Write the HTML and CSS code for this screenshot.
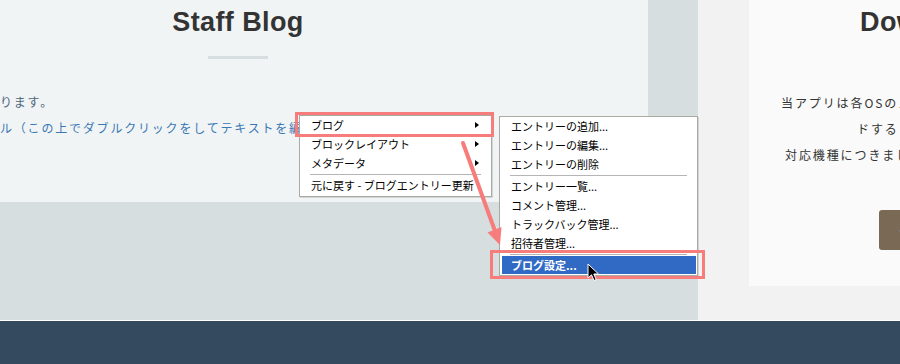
FILE: index.html
```html
<!DOCTYPE html>
<html lang="ja">
<head>
    <meta charset="UTF-8">
    <meta name="viewport" content="width=device-width, initial-scale=1.0">
    <title>Staff Blog</title>
    <link rel="stylesheet" href="styles.css">
</head>
<body>
<div class="page">

    <!-- Main content area -->
    <div class="main">
        <!-- Blog column -->
        <section class="blog-col">
            <div class="blog-card">
                <h2>Staff Blog</h2>
                <div class="rule"></div>
                <p class="note">ります。</p>
                <p class="edit-link">ル（この上でダブルクリックをしてテキストを編集します）</p>
            </div>
        </section>

        <!-- Download column -->
        <aside class="dl-col">
            <div class="dl-card">
                <h2>Download</h2>
                <p class="line-1">当アプリは各OSのストアからダウンロー</p>
                <p class="line-2">ドすることができます。</p>
                <p class="line-3">対応機種につきましては各ストアをご確認ください。</p>
                <a class="dl-button" href="#">ダウンロード</a>
            </div>
        </aside>
    </div>

    <!-- Footer section -->
    <footer></footer>

    <!-- Context menu -->
    <ul class="menu main-menu">
        <li class="has-sub">ブログ</li>
        <li class="has-sub">ブロックレイアウト</li>
        <li class="has-sub">メタデータ</li>
        <li class="sep"></li>
        <li>元に戻す - ブログエントリー更新</li>
    </ul>

    <!-- Sub menu -->
    <ul class="menu sub-menu">
        <li>エントリーの追加...</li>
        <li>エントリーの編集...</li>
        <li>エントリーの削除</li>
        <li class="sep"></li>
        <li>エントリー一覧...</li>
        <li>コメント管理...</li>
        <li>トラックバック管理...</li>
        <li>招待者管理...</li>
        <li class="sep"></li>
        <li class="active">ブログ設定...</li>
    </ul>

    <!-- Annotation boxes -->
    <div class="mark mark-blog"></div>
    <div class="mark mark-settings"></div>

    <!-- Annotation arrow -->
    <svg class="arrow" width="900" height="364" viewBox="0 0 900 364">
        <line x1="463" y1="143" x2="495" y2="231" stroke="#f77c7c" stroke-width="4" stroke-linecap="round"/>
        <polygon points="500,245 501.5,227 487.5,232.5" fill="#f77c7c"/>
    </svg>

    <!-- Mouse pointer -->
    <svg class="pointer" width="14" height="20" viewBox="0 0 14 20">
        <path d="M1 1 L1 15 L4.5 11.8 L7 17.5 L9.2 16.6 L6.8 11 L11.5 11 Z" fill="#000" stroke="#fff" stroke-width="1"/>
    </svg>

</div>
</body>
</html>
```

FILE: styles.css
```css
/* General styles */
html, body {
    margin: 0;
    padding: 0;
}

body {
    width: 900px;
    height: 364px;
    overflow: hidden;
    font-family: "Liberation Sans", "Noto Sans CJK JP", sans-serif;
    color: #333;
}

.page {
    position: relative;
    width: 900px;
    height: 364px;
}

/* Main area */
.main {
    display: flex;
    height: 320px;
    border-bottom: 1px solid #fff;
}

h2 {
    margin: 0;
    padding-top: 6px;
    font-size: 27px;
    line-height: 32px;
    font-weight: bold;
    letter-spacing: 0.4px;
    color: #333;
    white-space: nowrap;
}

/* Blog column */
.blog-col {
    width: 698px;
    flex-shrink: 0;
    background-color: #d6dee0;
}

.blog-card {
    width: 648px;
    height: 202px;
    box-sizing: border-box;
    padding-right: 172px;
    background-color: #f1f4f5;
}

.blog-card h2 {
    text-align: center;
}

.blog-card .rule {
    width: 60px;
    height: 3px;
    margin: 18px auto 0;
    background-color: #d6dee0;
}

.blog-card p {
    margin: 0;
    font-family: "Noto Sans CJK JP", sans-serif;
    font-size: 12px;
    line-height: 26px;
    letter-spacing: 1.8px;
    white-space: nowrap;
}

.blog-card .note {
    margin-top: 30px;
    color: #4d657c;
}

.blog-card .edit-link {
    color: #3a78b5;
}

/* Download column */
.dl-col {
    flex-grow: 1;
    padding-left: 51px;
    background-color: #f2f2f2;
    overflow: hidden;
}

.dl-card {
    height: 286px;
    background-color: #fafafa;
    overflow: hidden;
}

.dl-card h2 {
    padding-left: 111px;
}

.dl-card p {
    margin: 0;
    font-family: "Noto Sans CJK JP", sans-serif;
    font-size: 12px;
    line-height: 26px;
    letter-spacing: 1.9px;
    white-space: nowrap;
    color: #333;
}

.dl-card .line-1 {
    margin-top: 52px;
    padding-left: 32px;
}

.dl-card .line-2 {
    padding-left: 108px;
}

.dl-card .line-3 {
    padding-left: 36px;
}

.dl-button {
    display: block;
    width: 160px;
    height: 40px;
    margin: 42px 0 0 130px;
    padding-left: 20px;
    border-radius: 3px;
    background-color: #7a6a55;
    color: white;
    text-decoration: none;
    font-family: "Noto Sans CJK JP", sans-serif;
    font-size: 13px;
    line-height: 40px;
    white-space: nowrap;
}

/* Footer */
footer {
    height: 43px;
    background-color: #344a5e;
}

/* Context menus */
.menu {
    position: absolute;
    margin: 0;
    padding: 0 0 1px;
    list-style: none;
    background-color: #fff;
    border: 1px solid #aaa9a2;
    box-shadow: 1px 1px 0 rgba(0, 0, 0, 0.12);
    font-family: "Noto Sans CJK JP", sans-serif;
    font-size: 11px;
    color: #000;
}

.menu li {
    position: relative;
    height: 19px;
    line-height: 19px;
    padding-left: 11px;
    white-space: nowrap;
    overflow: hidden;
}

.menu li.sep {
    height: 0;
    margin: 1px 10px 1px 10px;
    padding: 0;
    border-top: 1px solid #b5b5b5;
}

.main-menu {
    left: 299px;
    top: 115px;
    width: 191px;
}

.main-menu li.has-sub::after {
    content: "";
    position: absolute;
    right: 12px;
    top: 6px;
    border-left: 4px solid #000;
    border-top: 3.5px solid transparent;
    border-bottom: 3.5px solid transparent;
}

.sub-menu {
    left: 499px;
    top: 116px;
    width: 197px;
}

.sub-menu li.active {
    height: 18px;
    line-height: 18px;
    margin: 0 1px 0 2px;
    padding-left: 9px;
    background-color: #316ac5;
    color: #fff;
    font-weight: bold;
}

/* Red annotation boxes */
.mark {
    position: absolute;
    box-sizing: border-box;
    border: 3px solid #f77c7c;
}

.mark-blog {
    left: 295px;
    top: 112px;
    width: 199px;
    height: 25px;
}

.mark-settings {
    left: 490px;
    top: 250px;
    width: 215px;
    height: 29px;
}

.arrow {
    position: absolute;
    left: 0;
    top: 0;
}

.pointer {
    position: absolute;
    left: 587px;
    top: 263px;
}
```
